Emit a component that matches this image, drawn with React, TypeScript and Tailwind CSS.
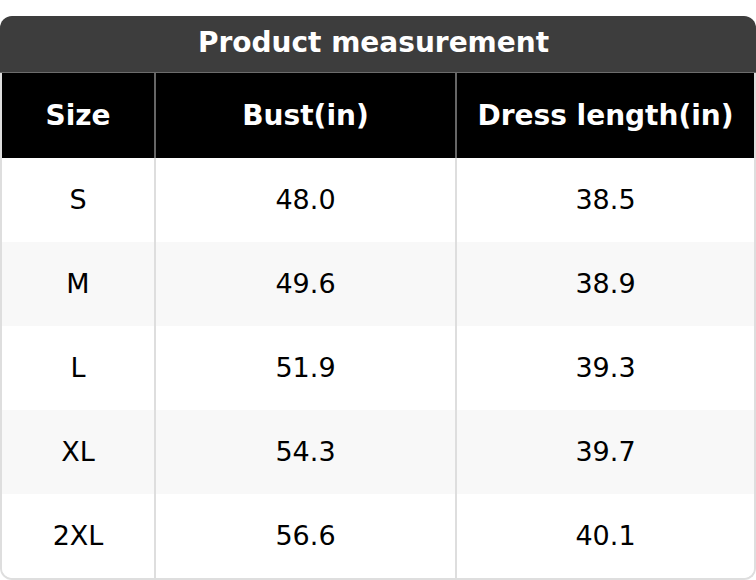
const rows = [
  { size: "S", bust: "48.0", length: "38.5" },
  { size: "M", bust: "49.6", length: "38.9" },
  { size: "L", bust: "51.9", length: "39.3" },
  { size: "XL", bust: "54.3", length: "39.7" },
  { size: "2XL", bust: "56.6", length: "40.1" },
];

export default function App() {
  return (
    <div
      className="w-[756px] h-[580px] bg-white pt-[16px]"
      style={{ fontFamily: '"DejaVu Sans", "Noto Sans", sans-serif' }}
    >
      <div className="overflow-hidden rounded-t-[12px]">
        <div className="flex h-[57px] items-center justify-center border-b border-[#6c6c6c] bg-[#3d3d3d] pb-[2px] pr-[9px] text-[28px] font-bold text-white">
          Product measurement
        </div>
      </div>
      <div className="overflow-hidden rounded-b-[12px] border-x-2 border-b-2 border-[#dedede]">
        <div className="flex h-[85px] bg-black text-[28px] font-bold text-white">
          <div className="flex w-[152px] items-center justify-center">Size</div>
          <div className="flex w-[303px] items-center justify-center border-x-2 border-[#666]">
            Bust(in)
          </div>
          <div className="flex flex-1 items-center justify-center">Dress length(in)</div>
        </div>
        {rows.map((r, i) => (
          <div
            key={r.size}
            className={`flex h-[84px] text-[27px] text-black ${i % 2 === 1 ? "bg-[#f8f8f8]" : "bg-white"}`}
          >
            <div className="flex w-[152px] items-center justify-center">{r.size}</div>
            <div className="flex w-[303px] items-center justify-center border-x-2 border-[#dedede]">
              {r.bust}
            </div>
            <div className="flex flex-1 items-center justify-center">{r.length}</div>
          </div>
        ))}
      </div>
    </div>
  );
}
